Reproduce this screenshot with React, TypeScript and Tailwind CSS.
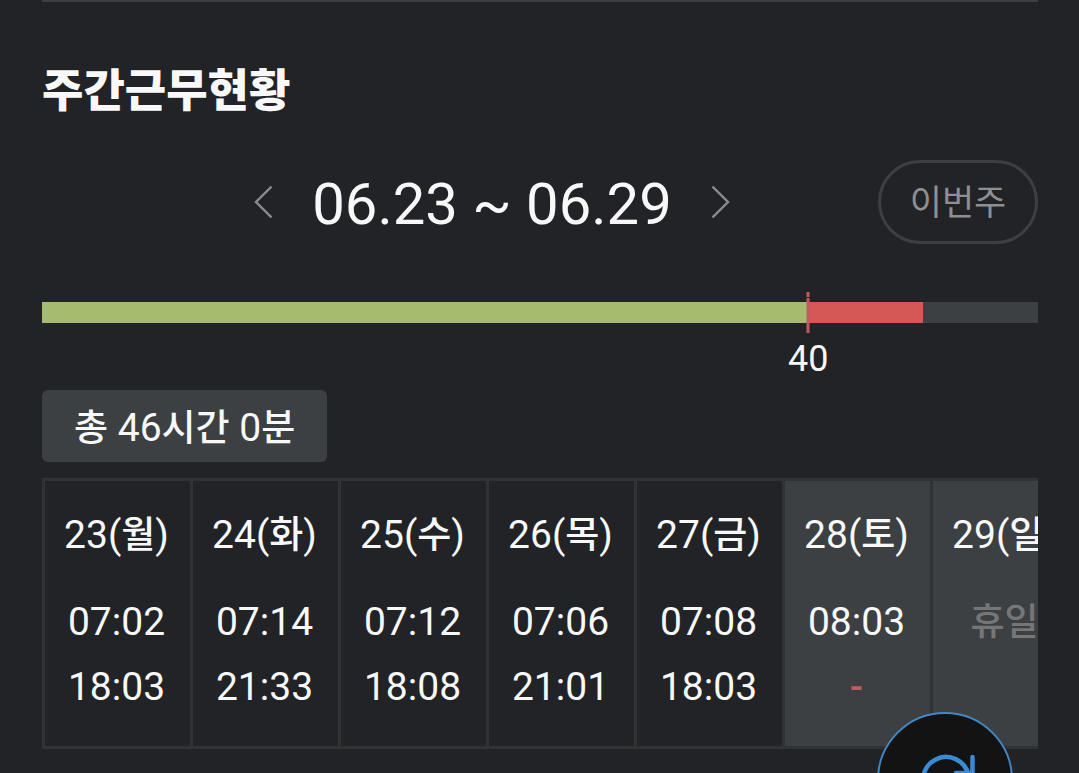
import React from "react";

type WorkDay = {
  date: string;
  weekday: string;
  start?: string;
  end?: string;
  weekend?: boolean;
};

const LIMIT_HOURS = 52;
const REGULAR_HOURS = 40;
const WORKED_HOURS = 46;

const days: WorkDay[] = [
  { date: "23", weekday: "월", start: "07:02", end: "18:03" },
  { date: "24", weekday: "화", start: "07:14", end: "21:33" },
  { date: "25", weekday: "수", start: "07:12", end: "18:08" },
  { date: "26", weekday: "목", start: "07:06", end: "21:01" },
  { date: "27", weekday: "금", start: "07:08", end: "18:03" },
  { date: "28", weekday: "토", start: "08:03", weekend: true },
  { date: "29", weekday: "일", weekend: true },
];

const percent = (hours: number) => `${(hours / LIMIT_HOURS) * 100}%`;

// Hangul is set a step smaller than the digits beside it
const Ko: React.FC<{ children: React.ReactNode }> = ({ children }) => (
  <span className="text-[37px] leading-none font-medium">{children}</span>
);

const WeekPicker: React.FC = () => (
  <div className="mt-[38px] flex items-center">
    <div className="flex flex-1 items-center justify-center gap-10 pl-16">
      <button type="button" aria-label="이전 주" className="text-[#8b8c8e]">
        <svg width="18" height="34" viewBox="0 0 18 34" fill="none" stroke="currentColor" strokeWidth="2.4">
          <path d="M17.500 1.500 2 17 17.500 32.500" />
        </svg>
      </button>
      <span className="pt-1 text-[58px] leading-[80px] whitespace-nowrap">
        06.23 ~ 06.29
      </span>
      <button type="button" aria-label="다음 주" className="text-[#8b8c8e]">
        <svg width="18" height="34" viewBox="0 0 18 34" fill="none" stroke="currentColor" strokeWidth="2.4">
          <path d="M.5 1.500 16 17 .5 32.500" />
        </svg>
      </button>
    </div>
    <button
      type="button"
      className="h-[84px] w-40 rounded-full border-3 border-[#3d4043] pt-1 text-[35px] leading-10 text-[#8e8f91]"
    >
      이번주
    </button>
  </div>
);

const HoursBar: React.FC = () => (
  <div className="mt-[58px]">
    <div className="relative h-[21px] bg-[#3d4042]">
      <div
        className="absolute inset-y-0 left-0 bg-[#d65856]"
        style={{ width: percent(WORKED_HOURS) }}
      />
      <div
        className="absolute inset-y-0 left-0 bg-[#a5bc6e]"
        style={{ width: percent(REGULAR_HOURS) }}
      />
      <div
        className="absolute -top-[10px] flex h-[41px] w-[3px] -translate-x-1/2 flex-col gap-px"
        style={{ left: percent(REGULAR_HOURS) }}
      >
        <div className="h-[5px] bg-[#c25b5f]" />
        <div className="flex-1 bg-[#c25b5f]" />
      </div>
      <span
        className="absolute top-9 -translate-x-1/2 text-[36px] leading-[42px]"
        style={{ left: percent(REGULAR_HOURS) }}
      >
        {REGULAR_HOURS}
      </span>
    </div>
  </div>
);

const WeekTable: React.FC = () => (
  <div className="mt-4 overflow-x-auto [scrollbar-width:none]">
    <table className="w-[1039px] table-fixed border-separate border-spacing-0 border-y-3 border-l-3 border-[#303234] text-center text-[39px] leading-[65px]">
      <thead>
        <tr>
          {days.map((day) => (
            <th
              key={day.date}
              scope="col"
              className={`h-[109px] border-r-3 border-[#303234] pr-0.5 font-normal ${day.weekend ? "bg-[#3d4042]" : ""}`}
            >
              {day.date}(<Ko>{day.weekday}</Ko>)
            </th>
          ))}
        </tr>
      </thead>
      <tbody>
        <tr>
          {days.map((day) => (
            <td
              key={day.date}
              className={`h-[65px] border-r-3 border-[#303234] pr-0.5 ${day.weekend ? "bg-[#3d4042]" : ""}`}
            >
              {day.start ?? (
                <span className="text-[#757678]">
                  <Ko>휴일</Ko>
                </span>
              )}
            </td>
          ))}
        </tr>
        <tr>
          {days.map((day) => (
            <td
              key={day.date}
              className={`h-[91px] border-r-3 border-[#303234] pr-0.5 pb-[26px] ${day.weekend ? "bg-[#3d4042]" : ""}`}
            >
              {day.end ??
                (day.start && (
                  <span className="font-medium text-[#c25b5b]">-</span>
                ))}
            </td>
          ))}
        </tr>
      </tbody>
    </table>
  </div>
);

const RefreshButton: React.FC = () => (
  <button
    type="button"
    aria-label="새로고침"
    className="fixed right-[66px] -bottom-[75px] flex size-[136px] items-center justify-center rounded-full border-2 border-[#4187c4] bg-[#131314] text-[#3a8bd6]"
  >
    <svg width="64" height="64" viewBox="0 0 64 64" fill="none" stroke="currentColor" strokeWidth="4.5" strokeLinecap="round">
      <path d="M55.500 27.200A23 23 0 1 0 52.900 43.500" />
      <path d="M59.500 9V25H43" strokeLinejoin="round" />
    </svg>
  </button>
);

const App: React.FC = () => {
  return (
    <div className="min-h-screen bg-[#222327] pr-[41px] pb-6 pl-[42px] font-['Roboto','Noto_Sans_CJK_KR',sans-serif] text-[#f8f8f9]">
      <main className="border-t-2 border-[#3d3e42]">
        <h1 className="pt-[60px] text-[45px] leading-[60px] font-black">
          주간근무현황
        </h1>
        <WeekPicker />
        <HoursBar />
        <div className="mt-[67px] w-fit rounded-md bg-[#3d4042] px-8 pt-1 text-[39px] leading-[68px] whitespace-nowrap">
          <Ko>총</Ko> 46<Ko>시간</Ko> 0<Ko>분</Ko>
        </div>
        <WeekTable />
      </main>
      <RefreshButton />
    </div>
  );
};

export default App;
